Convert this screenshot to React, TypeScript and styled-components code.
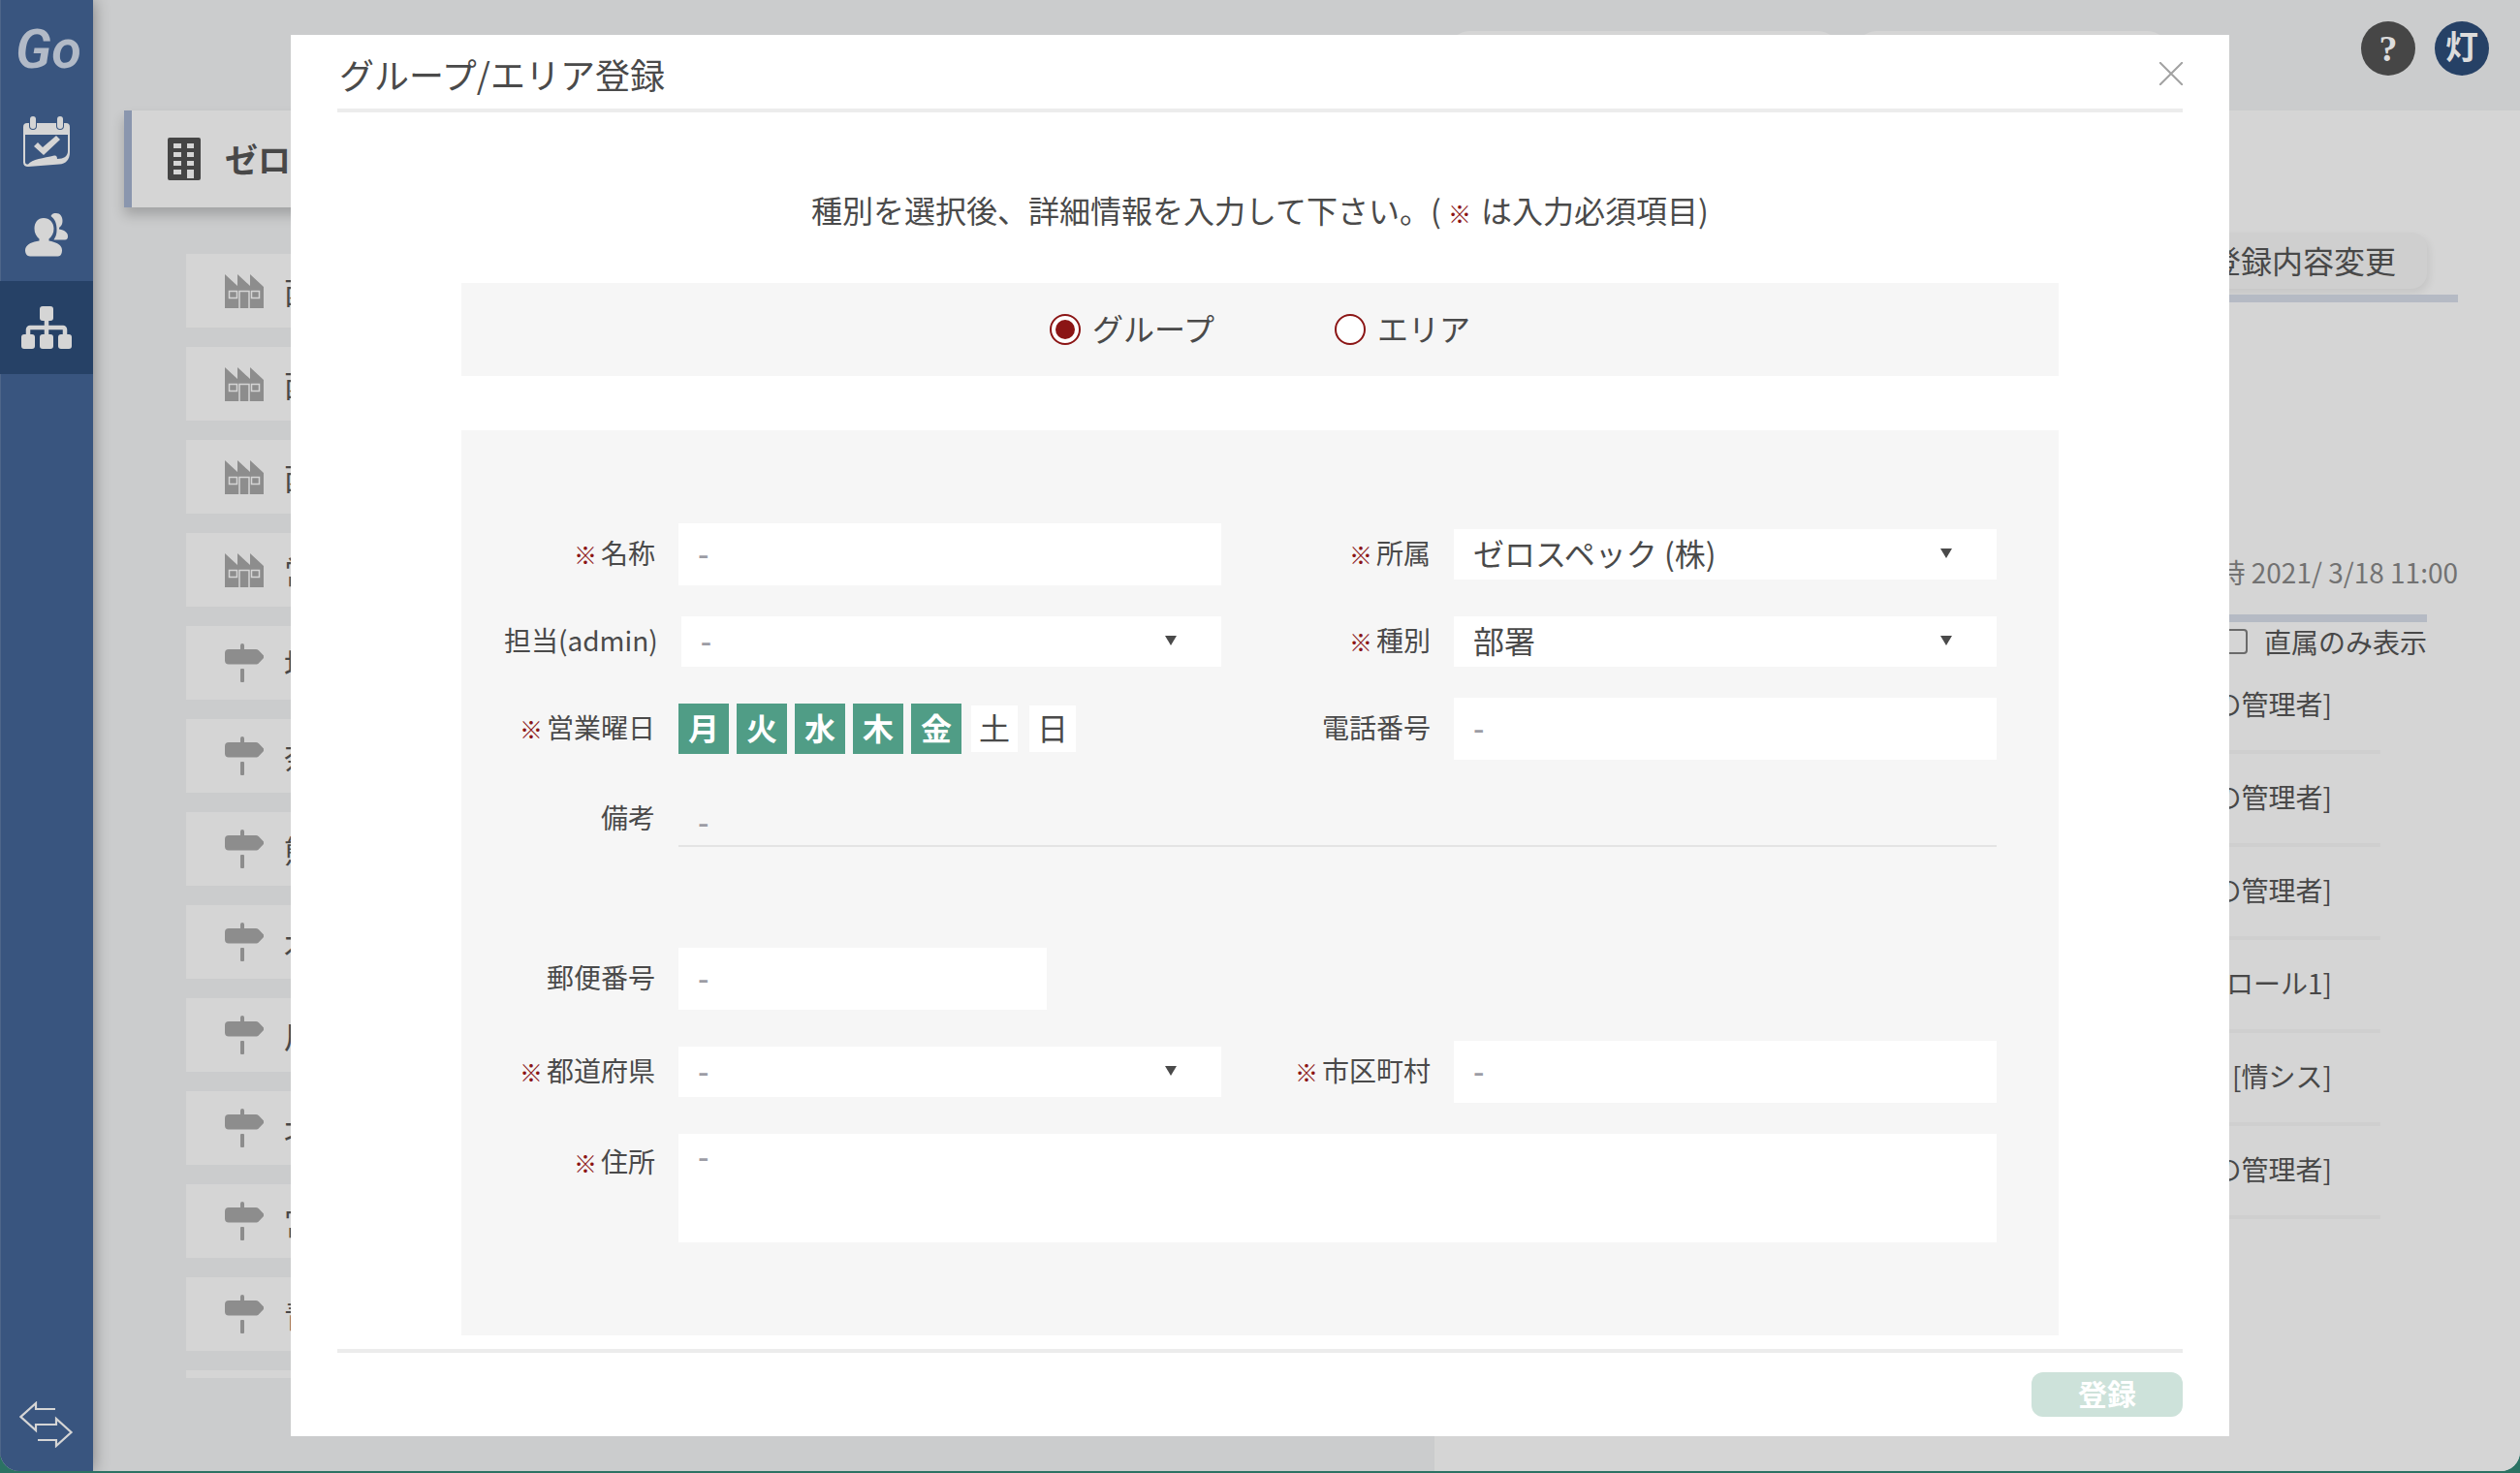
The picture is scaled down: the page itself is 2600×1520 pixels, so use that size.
import React, { useState } from "react";
import styled, { createGlobalStyle, css } from "styled-components";

const color = {
  text: "#4a4a4a",
  dimText: "#484848",
  navy: "#39557f",
  navyActive: "#264166",
  page: "#cbcccd",
  card: "#d5d5d5",
  panel: "#f6f6f6",
  rule: "#ececec",
  red: "#8b1515",
  green: "#509d86",
  dash: "#9c9ca4",
};

const GlobalStyle = createGlobalStyle`
  *, *::before, *::after { box-sizing: border-box; }
  html, body, #root { height: 100%; }
  body {
    margin: 0;
    overflow: hidden;
    background: #2b7263;
    color: ${color.text};
    font-family: "Noto Sans CJK JP", "Noto Sans", sans-serif;
    font-size: 28px;
    line-height: 40px;
  }
  button, input, select, textarea { font: inherit; color: inherit; }
  button { cursor: pointer; border: 0; padding: 0; background: none; }
  ul, h1, h2, p { margin: 0; padding: 0; list-style: none; font-weight: 400; }
`;

/* ---------- shell ---------- */

const Shell = styled.div`
  display: grid;
  grid-template-columns: 96px 1fr;
  height: calc(100vh - 2px);
  border-radius: 0 0 20px 20px;
  overflow: hidden;
  background: ${color.page};
`;

const Sidebar = styled.nav`
  display: flex;
  flex-direction: column;
  z-index: 1;
  background: ${color.navy};
  box-shadow: inset 1px 0 0 #4d6589, 0 0 16px rgba(0, 0, 0, 0.4);
`;

const Logo = styled.a`
  display: flex;
  align-items: center;
  justify-content: center;
  height: 98px;
  padding: 4px 0 0 4px;
  color: #b2bac7;
  font: italic 600 56px/56px "Liberation Sans Narrow", "Roboto", sans-serif;
  text-decoration: none;
`;

const NavItem = styled.a<{ $active?: boolean; $last?: boolean }>`
  display: flex;
  align-items: center;
  justify-content: center;
  height: 96px;
  color: ${color.card};
  background: ${(p) => (p.$active ? color.navyActive : "transparent")};
  ${(p) => p.$last && css`margin-top: auto;`}
`;

const Main = styled.div`
  display: grid;
  grid-template-rows: 114px 1fr;
  min-height: 0;
`;

const TopBar = styled.header`
  display: flex;
  justify-content: flex-end;
  align-items: flex-start;
  gap: 20px;
  padding: 22px 32px 0 0;
`;

const Search = styled.input<{ $width: number; $gap: number }>`
  width: ${(p) => p.$width}px;
  height: 52px;
  margin: 10px ${(p) => p.$gap}px 0 0;
  border: 0;
  border-radius: 20px;
  background: ${color.card};
`;

const Round = styled.button<{ $bg: string; $size: number }>`
  width: 56px;
  height: 56px;
  border-radius: 50%;
  background: ${(p) => p.$bg};
  color: #dcdcdc;
  font: 700 ${(p) => p.$size}px/56px "Liberation Serif", "Noto Sans CJK JP", serif;
`;

const Body = styled.div`
  display: grid;
  grid-template-columns: 1384fr 1120fr;
  min-height: 0;
`;

/* ---------- left column: organisation tree ---------- */

const Tree = styled.section`
  padding: 0 32px;
`;

const RootCard = styled.h2`
  display: flex;
  align-items: center;
  height: 100px;
  padding-left: 37px;
  gap: 25px;
  border-left: 8px solid #8a96ae;
  background: ${color.card};
  color: ${color.dimText};
  font-weight: 700;
  font-size: 34px;
  box-shadow: 0 8px 12px rgba(0, 0, 0, 0.2);
`;

const Branches = styled.ul`
  display: grid;
  gap: 20px;
  max-height: 1160px;
  margin: 48px 0 0 64px;
  overflow: hidden;
`;

const Branch = styled.li`
  display: flex;
  align-items: center;
  gap: 21px;
  height: 76px;
  padding-left: 40px;
  background: ${color.card};
  color: ${color.dimText};
  font-size: 32px;
`;

/* ---------- right column: details ---------- */

const Details = styled.section`
  display: flex;
  flex-direction: column;
  padding: 126px 64px 0;
  background: ${color.card};
  color: ${color.dimText};
`;

const EditButton = styled.button`
  align-self: flex-end;
  height: 58px;
  margin: 0 32px 6px 0;
  padding: 0 32px 2px;
  border-radius: 16px;
  background: #cfcfcf;
  font-size: 32px;
  box-shadow: 2px 4px 8px rgba(0, 0, 0, 0.08);
`;

const Bar = styled.div`
  flex: none;
  height: 8px;
  background: #b5bac4;
`;

const Stamp = styled.p`
  margin: 258px 0 24px;
  text-align: right;
  color: #727272;
`;

const Inset = styled.div`
  display: flex;
  flex-direction: column;
  padding-right: 32px;
`;

const DirectOnly = styled.label`
  display: flex;
  align-items: center;
  justify-content: flex-end;
  gap: 17px;
  height: 40px;

  input {
    appearance: none;
    width: 26px;
    height: 26px;
    margin: 0;
    border: 2px solid #6a6a6a;
    border-radius: 4px;
  }
`;

const Members = styled.ul`
  margin-right: 48px;
`;

const Member = styled.li`
  height: 96px;
  padding: 24px 50px 0 0;
  border-bottom: 4px solid #cfcfcf;
  text-align: right;
`;

/* ---------- modal ---------- */

const Overlay = styled.div`
  position: fixed;
  inset: 0;
  z-index: 2;
  padding: 36px 300px;
`;

const Modal = styled.div`
  background: #fff;
  padding: 0 48px 20px;
`;

const ModalHeader = styled.header`
  display: flex;
  align-items: center;
  justify-content: space-between;
  height: 80px;
  border-bottom: 4px solid ${color.rule};

  h1 {
    padding: 4px 0 0 2px;
    font-size: 36px;
    line-height: 52px;
  }
`;

const Close = styled.button`
  display: flex;
  padding-top: 4px;
`;

const Content = styled.div`
  padding: 76px 128px 14px;
`;

const Lead = styled.p`
  margin-bottom: 52px;
  text-align: center;
  font-size: 32px;
  line-height: 48px;
`;

const Mark = styled.span<{ $lead?: boolean }>`
  margin-right: ${(p) => (p.$lead ? 10 : 4)}px;
  color: ${color.red};
  font-size: 24px;
  line-height: 24px;
`;

const TypeBar = styled.fieldset`
  display: flex;
  justify-content: center;
  gap: 124px;
  height: 96px;
  margin: 0 0 56px;
  padding: 0;
  border: 0;
  background: ${color.panel};
`;

const Choice = styled.label`
  display: flex;
  align-items: center;
  gap: 12px;
  font-size: 32px;

  span {
    padding-bottom: 4px;
  }

  input {
    appearance: none;
    display: grid;
    place-items: center;
    width: 32px;
    height: 32px;
    margin: 0;
    border: 2px solid ${color.red};
    border-radius: 50%;
    background: #fff;
  }

  input:checked::after {
    content: "";
    width: 20px;
    height: 20px;
    border-radius: 50%;
    background: ${color.red};
  }
`;

const Form = styled.div`
  display: grid;
  grid-template-columns: 784fr 800fr;
  row-gap: 32px;
  padding: 96px 64px 96px 0;
  background: ${color.panel};
`;

const Field = styled.div<{ $wide?: boolean; $right?: boolean; $top?: boolean; $section?: boolean }>`
  display: flex;
  align-items: ${(p) => (p.$top ? "flex-start" : "center")};
  ${(p) => p.$wide && css`grid-column: 1 / -1;`}
  ${(p) => p.$section && css`grid-column: 1 / -1; margin-top: 72px;`}

  > :first-child {
    min-width: ${(p) => (p.$right ? 240 : 224)}px;
    ${(p) => p.$top && css`padding-top: 8px;`}
  }
`;

const Label = styled.label`
  flex: none;
  padding: 0 24px 4px 44px;
  text-align: right;
`;

const inputLook = css`
  flex: 1;
  min-width: 0;
  border: 0;
  border-radius: 0;
  outline: 0;
  background: #fff;
  font-size: 32px;
  padding: 0 20px 4px;

  &::placeholder {
    color: ${color.dash};
    font-weight: 500;
    opacity: 1;
  }
`;

const TextInput = styled.input<{ $short?: boolean }>`
  ${inputLook}
  height: 64px;
  ${(p) => p.$short && css`flex: 0 0 380px;`}
`;

const NoteInput = styled.input`
  ${inputLook}
  height: 58px;
  padding-top: 10px;
  background: transparent;
  border-bottom: 2px solid #e4e4e4;
`;

const Address = styled.textarea`
  ${inputLook}
  height: 112px;
  line-height: 44px;
  resize: none;
`;

const SelectBox = styled.div`
  position: relative;
  display: flex;
  flex: 1;
  height: 52px;

  svg {
    position: absolute;
    top: 20px;
    right: 46px;
    pointer-events: none;
  }
`;

const Select = styled.select<{ $empty?: boolean }>`
  ${inputLook}
  appearance: none;
  color: ${(p) => (p.$empty ? color.dash : color.text)};
  font-weight: ${(p) => (p.$empty ? 500 : 400)};
`;

const Days = styled.div`
  display: flex;
  gap: 8px;
`;

const Day = styled.button<{ $on: boolean }>`
  width: 52px;
  height: 52px;
  padding-bottom: 4px;
  border: 2px solid ${(p) => (p.$on ? color.green : color.panel)};
  background: ${(p) => (p.$on ? color.green : "#fff")};
  color: ${(p) => (p.$on ? "#fff" : color.text)};
  font-size: 32px;
  font-weight: ${(p) => (p.$on ? 700 : 400)};
  line-height: 44px;
`;

const ModalFooter = styled.footer`
  display: flex;
  justify-content: flex-end;
  padding-top: 20px;
  border-top: 4px solid ${color.rule};
`;

const Submit = styled.button`
  width: 156px;
  height: 46px;
  padding-bottom: 4px;
  border-radius: 12px;
  background: #cde2da;
  color: #fff;
  font-size: 30px;
  font-weight: 700;
  line-height: 40px;
`;

/* ---------- icons ---------- */

const CalendarIcon = () => (
  <svg width="48" height="52" viewBox="0 0 48 52" fill="currentColor">
    <path d="M4 7h2v3a4 4 0 0 0 8 0V7h20v3a4 4 0 0 0 8 0V7h2a4 4 0 0 1 4 4v26c0 8-4 12-11 12.500L5 52c-3 0-5-1.500-5-4.500V11a4 4 0 0 1 4-4zM2 19v28c0 2 1 2.500 3 2.500 4-5 16-6.500 27-9 2-.5 3 1 3 3.500 7 0 11-3 11-8V19z" fillRule="evenodd" />
    <rect x="7" y="0" width="6" height="13" rx="3" />
    <rect x="35" y="0" width="6" height="13" rx="3" />
    <path d="M11 31l4-4 5 5 14-12 4 4-17 16z" />
  </svg>
);

const UsersIcon = () => (
  <svg width="46" height="46" viewBox="0 0 46 46" fill="currentColor">
    <path d="M20 6c6 0 10.500 4.500 10.500 11 0 4.500-2 8-5 10.500v2C34 31 39 34 39 39.500c0 3-1.500 6-4 6H6c-3 0-5-3-5-6C1 34 7 30.500 15.500 29.500v-2c-3-2.500-5-6-5-10.500C10.500 10.500 14 6 20 6z" />
    <path d="M27.500 4C28.500 1.500 30.500 1 33 1c4 0 6.500 3.500 6.500 8 0 3-1 5-3.500 7v1.500c6 1 9 3.500 9 7.500 0 2-1 3.500-3 3.500H30.500c1.500-2.500 3-5 3-10C33.500 11 31.500 7 27.500 4z" />
  </svg>
);

const SitemapIcon = () => (
  <svg width="52" height="44" viewBox="0 0 52 44" fill="currentColor">
    <rect x="19" y="0" width="14" height="15" rx="3" />
    <rect x="0" y="29" width="14" height="15" rx="3" />
    <rect x="19" y="29" width="14" height="15" rx="3" />
    <rect x="38" y="29" width="14" height="15" rx="3" />
    <path d="M26 14v16M7 30v-6a2 2 0 0 1 2-2h34a2 2 0 0 1 2 2v6" fill="none" stroke="currentColor" strokeWidth="4.500" />
  </svg>
);

const SwapIcon = () => (
  <svg width="56" height="48" viewBox="0 0 56 48" fill="none" stroke="currentColor" strokeWidth="2.200">
    <path d="M37 8H17V2L1.500 16 17 30v-6h21v-6l15.500 14L38 46v-6H19" />
  </svg>
);

const BuildingIcon = () => (
  <svg width="34" height="44" viewBox="0 0 34 44" fill="#454545" fillRule="evenodd">
    <path d="M2 0h30a2 2 0 0 1 2 2v40a2 2 0 0 1-2 2H2a2 2 0 0 1-2-2V2a2 2 0 0 1 2-2zM6 6v5h8V6zM20 6v5h7V6zM6 15v5h8v-5zM20 15v5h7v-5zM6 24v5h8v-5zM20 24v5h7v-5zM6 33v5h8v-5zM20 33v9h7v-9z" />
  </svg>
);

const FactoryIcon = () => (
  <svg width="40" height="35" viewBox="0 0 40 35">
    <path d="M0 0l13 12V0l13 12V0l14 13v22H0z" fill="#8d8d8d" />
    <path d="M4.500 17.500h8v7h-8zM27.500 17.500h8v7h-8zM15 35V17.500h10V35" fill="none" stroke={color.card} strokeWidth="1.500" />
  </svg>
);

const SignIcon = () => (
  <svg width="40" height="40" viewBox="0 0 40 40" fill="#8d8d8d">
    <path d="M16 7V2a2 2 0 0 1 4 0v4h12c1 0 2 .4 3 1.300l5 5.200v2.500l-5 5.200c-1 1-2 1.300-3 1.300H4a4 4 0 0 1-4-4V10a4 4 0 0 1 4-4h12z" />
    <rect x="16" y="26" width="4" height="14" rx="1" />
  </svg>
);

const CloseIcon = () => (
  <svg width="24" height="24" viewBox="0 0 24 24" stroke="#a2a2a2" strokeWidth="2">
    <path d="M0 0l24 24M24 0L0 24" />
  </svg>
);

const Arrow = () => (
  <svg width="12" height="10" viewBox="0 0 12 10" fill={color.text}>
    <path d="M0 0h12L6 10z" />
  </svg>
);

/* ---------- data ---------- */

const branches = ["西", "西", "西", "営", "地", "奈", "熊", "木", "川", "北", "宮", "青", ""];
const members = ["[の管理者]", "[の管理者]", "[の管理者]", "[ロール1]", "[情シス]", "[の管理者]"];
const week = ["月", "火", "水", "木", "金", "土", "日"];

const Required = () => <Mark>※</Mark>;

function Picker({ id, value }: { id: string; value: string }) {
  return (
    <SelectBox>
      <Select id={id} defaultValue={value} $empty={value === "-"}>
        <option>{value}</option>
      </Select>
      <Arrow />
    </SelectBox>
  );
}

export default function App() {
  const [open, setOpen] = useState([true, true, true, true, true, false, false]);

  return (
    <>
      <GlobalStyle />
      <Shell>
        <Sidebar>
          <Logo href="#">Go</Logo>
          <NavItem href="#" aria-label="予定"><CalendarIcon /></NavItem>
          <NavItem href="#" aria-label="ユーザー"><UsersIcon /></NavItem>
          <NavItem href="#" aria-label="組織" $active><SitemapIcon /></NavItem>
          <NavItem href="#" aria-label="切替" $last><SwapIcon /></NavItem>
        </Sidebar>
        <Main>
          <TopBar>
            <Search aria-label="組織検索" $width={400} $gap={0} />
            <Search aria-label="検索" $width={320} $gap={180} />
            <Round $bg="#464646" $size={38} aria-label="ヘルプ">?</Round>
            <Round $bg={color.navyActive} $size={34}>灯</Round>
          </TopBar>
          <Body>
            <Tree>
              <RootCard><BuildingIcon />ゼロ</RootCard>
              <Branches>
                {branches.map((name, i) => (
                  <Branch key={i}>
                    {i < 4 ? <FactoryIcon /> : <SignIcon />}
                    {name}
                  </Branch>
                ))}
              </Branches>
            </Tree>
            <Details>
              <EditButton>登録内容変更</EditButton>
              <Bar />
              <Stamp>時 2021/ 3/18 11:00</Stamp>
              <Inset>
                <Bar />
                <DirectOnly><input type="checkbox" />直属のみ表示</DirectOnly>
                <Members>
                  {members.map((m, i) => <Member key={i}>{m}</Member>)}
                </Members>
              </Inset>
            </Details>
          </Body>
        </Main>
      </Shell>

      <Overlay>
        <Modal role="dialog" aria-labelledby="dialog-title">
          <ModalHeader>
            <h1 id="dialog-title">グループ/エリア登録</h1>
            <Close aria-label="閉じる"><CloseIcon /></Close>
          </ModalHeader>
          <Content>
            <Lead>種別を選択後、詳細情報を入力して下さい。( <Mark $lead>※</Mark>は入力必須項目)</Lead>
            <TypeBar>
              <Choice><input type="radio" name="kind" defaultChecked /><span>グループ</span></Choice>
              <Choice><input type="radio" name="kind" /><span>エリア</span></Choice>
            </TypeBar>
            <Form>
              <Field>
                <Label htmlFor="name"><Required />名称</Label>
                <TextInput id="name" placeholder="-" />
              </Field>
              <Field $right>
                <Label htmlFor="parent"><Required />所属</Label>
                <Picker id="parent" value="ゼロスペック (株)" />
              </Field>
              <Field>
                <Label htmlFor="admin">担当(admin)</Label>
                <Picker id="admin" value="-" />
              </Field>
              <Field $right>
                <Label htmlFor="type"><Required />種別</Label>
                <Picker id="type" value="部署" />
              </Field>
              <Field>
                <Label as="span" id="days"><Required />営業曜日</Label>
                <Days role="group" aria-labelledby="days">
                  {week.map((d, i) => (
                    <Day
                      key={d}
                      type="button"
                      $on={open[i]}
                      aria-pressed={open[i]}
                      onClick={() => setOpen(open.map((v, n) => (n === i ? !v : v)))}
                    >
                      {d}
                    </Day>
                  ))}
                </Days>
              </Field>
              <Field $right>
                <Label htmlFor="tel">電話番号</Label>
                <TextInput id="tel" placeholder="-" />
              </Field>
              <Field $wide>
                <Label htmlFor="note">備考</Label>
                <NoteInput id="note" placeholder="-" />
              </Field>
              <Field $section>
                <Label htmlFor="zip">郵便番号</Label>
                <TextInput id="zip" placeholder="-" $short />
              </Field>
              <Field>
                <Label htmlFor="pref"><Required />都道府県</Label>
                <Picker id="pref" value="-" />
              </Field>
              <Field $right>
                <Label htmlFor="city"><Required />市区町村</Label>
                <TextInput id="city" placeholder="-" />
              </Field>
              <Field $wide $top>
                <Label htmlFor="address"><Required />住所</Label>
                <Address id="address" placeholder="-" />
              </Field>
            </Form>
          </Content>
          <ModalFooter>
            <Submit type="button">登録</Submit>
          </ModalFooter>
        </Modal>
      </Overlay>
    </>
  );
}
